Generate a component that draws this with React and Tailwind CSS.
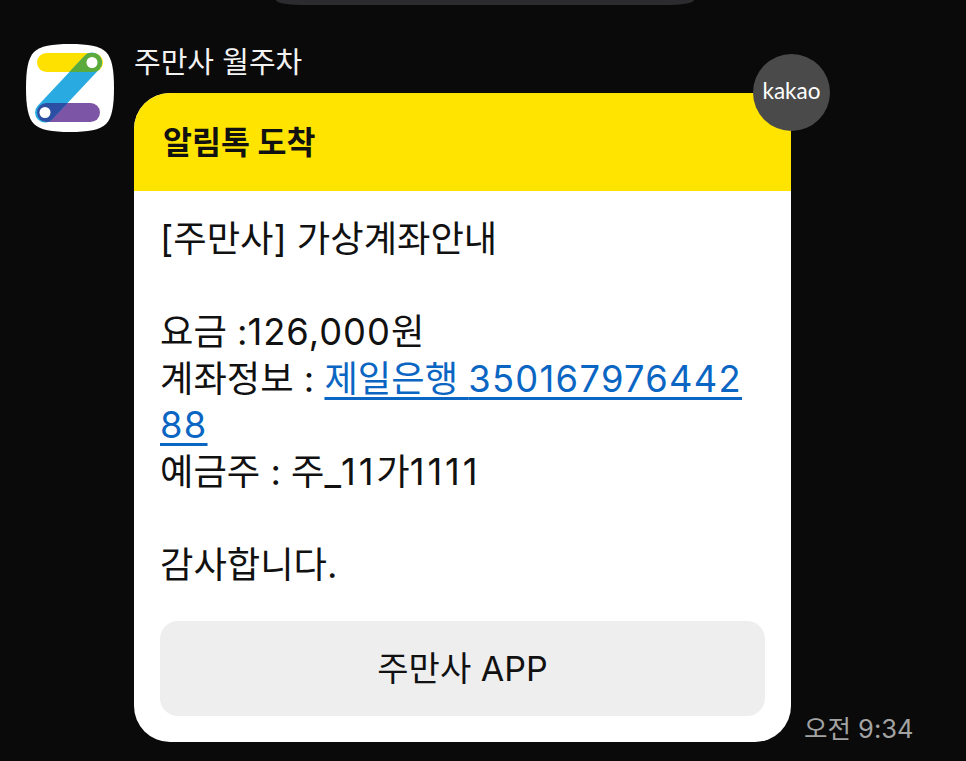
export default function App() {
  const font = 'font-["Inter","Noto_Sans_CJK_KR",sans-serif]';
  const link = "text-[#0b66c3] underline decoration-[2.5px] underline-offset-[5px]";
  return (
    <div className={`w-[966px] h-[761px] overflow-hidden bg-[#0a0a0a] ${font}`}>
      <div className="ml-[276px] w-[418px] h-[5px] rounded-bl-[24px_5px] rounded-br-[24px_5px] bg-[#2c2c2e]" />
      <div className="flex items-start pl-[26px] pt-[39px]">
        <svg width="88" height="88" viewBox="0 0 88 88" className="shrink-0">
          <defs>
            <clipPath id="yb"><rect x="11" y="9" width="66" height="19" rx="9.5" /></clipPath>
            <clipPath id="pb"><rect x="11" y="59" width="63" height="19" rx="9.5" /></clipPath>
          </defs>
          <path d="M44 0C62 0 74 2 80 8C86 14 88 26 88 44C88 62 86 74 80 80C74 86 62 88 44 88C26 88 14 86 8 80C2 74 0 62 0 44C0 26 2 14 8 8C14 2 26 0 44 0Z" fill="#fff" />
          <rect x="11" y="9" width="66" height="19" rx="9.5" fill="#ffe100" />
          <rect x="11" y="59" width="63" height="19" rx="9.5" fill="#7d55a6" />
          <line x1="66" y1="18.5" x2="19" y2="68.5" stroke="#29abe2" strokeWidth="20" strokeLinecap="round" />
          <line x1="66" y1="18.5" x2="19" y2="68.5" stroke="#5aab3c" strokeWidth="20" strokeLinecap="round" clipPath="url(#yb)" />
          <line x1="66" y1="18.5" x2="19" y2="68.5" stroke="#2c4fa3" strokeWidth="20" strokeLinecap="round" clipPath="url(#pb)" />
          <circle cx="66" cy="18.5" r="5.5" fill="#fff" />
          <circle cx="19" cy="68.5" r="5.5" fill="#fff" />
        </svg>
        <div className="ml-[20px] flex items-end">
          <div className="w-[657px]">
            <div className="h-[49px] text-[29px] leading-[38px] text-[#f2f2f2]">주만사 월주차</div>
            <div className="relative w-[657px] h-[649px] rounded-[36px] bg-white">
              <div className="flex h-[98px] items-center rounded-t-[36px] bg-[#ffe400] pl-[29px] pt-[2px] text-[31.5px] font-bold text-[#111]">알림톡 도착</div>
              <div className="px-[26px] pt-[25px] text-[36.3px] leading-[46.5px] text-[#111]">
                <div>[주만사] 가상계좌안내</div>
                <div className="h-[46.5px]" />
                <div>요금 :<span className="tracking-[1px]">126,000</span>원</div>
                <div>계좌정보 : <span className={link}>제일은행 <span className="tracking-[1.3px]">350167976442</span></span></div>
                <div><span className={`${link} tracking-[1.3px]`}>88</span></div>
                <div>예금주 : 주_<span className="tracking-[2.9px]">11</span>가<span className="tracking-[2.9px]">1111</span></div>
                <div className="h-[46.5px]" />
                <div>감사합니다.</div>
              </div>
              <div className="mx-[26px] mt-[33px] flex h-[95px] items-center justify-center rounded-[18px] bg-[#eeeeee] text-[34px] text-[#111]">주만사 APP</div>
              <div className='absolute -right-[39px] -top-[39px] flex h-[77px] w-[77px] items-center justify-center rounded-full bg-[#4a4a4a] pb-[3px] font-["Lato",sans-serif] text-[22.5px] text-white'>kakao</div>
            </div>
          </div>
          <div className="ml-[13px] mb-[-2px] text-[25.5px] leading-[30px] text-[#a3a3a3] whitespace-nowrap">오전 9:34</div>
        </div>
      </div>
    </div>
  );
}
